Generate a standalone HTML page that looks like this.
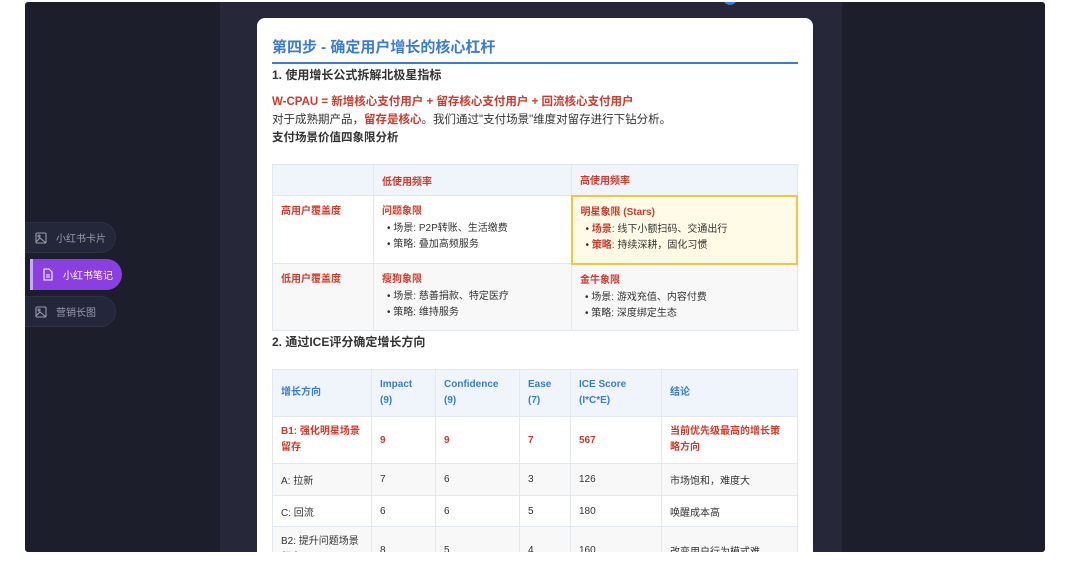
<!DOCTYPE html>
<html><head><meta charset="utf-8"><style>
*{margin:0;padding:0;box-sizing:border-box}
body{width:1080px;height:570px;background:#fff;font-family:"Liberation Sans","Noto Sans CJK SC",sans-serif;position:relative;overflow:hidden}
.panel{position:absolute;left:25px;top:2px;width:1020px;height:550px;background:#1c1e2b;border-radius:3px;overflow:hidden}
.mid{position:absolute;left:195px;top:0;width:622px;height:550px;background:#262738}
.dot{position:absolute;left:504px;top:-6px;width:12px;height:9px;border-radius:50%;background:#3a7bd5}
.btn{position:absolute;height:31px;border-radius:0 16px 16px 0;background:#24263a;color:#9a9cab;font-size:10px;display:flex;align-items:center;padding-left:10px;gap:9px;border:1px solid #2e3044;border-left:none}
.btn.on{background:#8a3fe0;color:#fff;border:none;border-left:3px solid #c9a6ff;padding-left:9px}
.card{position:absolute;left:232px;top:16px;width:556px;height:560px;background:#fff;border-radius:8px;padding:0 15px;color:#333}
h1{font-size:15px;color:#3a7bd5;font-weight:bold;padding-top:18px;height:46px;border-bottom:2px solid #3a7bd5}
.h2{font-size:12px;font-weight:bold;color:#333;height:20px}
.red{color:#d0392b;font-weight:bold}
p{font-size:11.5px;line-height:18px}
table{border-collapse:collapse;width:526px;font-size:10px}
td,th{border:1px solid #e3e7ee;text-align:left;vertical-align:top;padding:6px 8px 3px}
th{background:#f0f5fc;color:#d0392b;font-weight:bold;vertical-align:middle;padding:0 8px}
ul{list-style:none;margin-top:4px}
li{line-height:16px;padding-left:5px}
li:before{content:"• ";}
.t2 th{color:#3a7bd5;line-height:16px}
.t2 td{vertical-align:middle;padding:0 8px}
.g{background:#f8f8f8}
</style></head><body>
<div class="panel">
<div class="mid"><div class="dot"></div></div>
<div class="btn" style="left:0;top:220px;width:91px"><svg width="12" height="12" viewBox="0 0 12 12" fill="none" stroke="#9a9cab" stroke-width="1.1"><rect x="1" y="1" width="10" height="10" rx="1"/><circle cx="4" cy="4" r="1"/><path d="M1 10l4-4 6 5"/></svg>小红书卡片</div>
<div class="btn on" style="left:5px;top:257px;width:92px"><svg width="12" height="13" viewBox="0 0 12 13" fill="none" stroke="#fff" stroke-width="1.1"><path d="M2 1h5l3 3v8H2z M4 7h4 M4 9h4"/></svg>小红书笔记</div>
<div class="btn" style="left:0;top:294px;width:91px"><svg width="12" height="12" viewBox="0 0 12 12" fill="none" stroke="#9a9cab" stroke-width="1.1"><rect x="1" y="1" width="10" height="10" rx="1"/><circle cx="4" cy="4" r="1"/><path d="M1 10l4-4 6 5"/></svg>营销长图</div>
<div class="card">
<h1>第四步 - 确定用户增长的核心杠杆</h1>
<div class="h2" style="margin-top:2px">1. 使用增长公式拆解北极星指标</div>
<p class="red" style="margin-top:7px">W-CPAU = 新增核心支付用户 + 留存核心支付用户 + 回流核心支付用户</p>
<p>对于成熟期产品，<span class="red">留存是核心</span>。我们通过"支付场景"维度对留存进行下钻分析。</p>
<p style="font-weight:bold">支付场景价值四象限分析</p>
<table style="margin-top:17px">
<tr style="height:31px"><th style="width:101px"></th><th style="width:198px">低使用频率</th><th>高使用频率</th></tr>
<tr style="height:68px"><td class="red">高用户覆盖度</td><td><span class="red">问题象限</span><ul><li>场景: P2P转账、生活缴费</li><li>策略: 叠加高频服务</li></ul></td><td style="background:#fffbe6;border:2px solid #f5c542"><span class="red">明星象限 (Stars)</span><ul><li><span class="red">场景</span>: 线下小额扫码、交通出行</li><li><span class="red">策略</span>: 持续深耕，固化习惯</li></ul></td></tr>
<tr style="height:67px" class="g"><td class="red">低用户覆盖度</td><td><span class="red">瘦狗象限</span><ul><li>场景: 慈善捐款、特定医疗</li><li>策略: 维持服务</li></ul></td><td><span class="red">金牛象限</span><ul><li>场景: 游戏充值、内容付费</li><li>策略: 深度绑定生态</li></ul></td></tr>
</table>
<div class="h2" style="margin-top:2px">2. 通过ICE评分确定增长方向</div>
<table class="t2" style="margin-top:16px">
<tr style="height:47px"><th style="width:99px">增长方向</th><th style="width:64px">Impact<br>(9)</th><th style="width:84px">Confidence<br>(9)</th><th style="width:51px">Ease<br>(7)</th><th style="width:91px">ICE Score<br>(I*C*E)</th><th>结论</th></tr>
<tr style="height:47px" class="red"><td style="line-height:16px">B1: 强化明星场景留存</td><td>9</td><td>9</td><td>7</td><td>567</td><td style="line-height:16px">当前优先级最高的增长策略方向</td></tr>
<tr style="height:32px" class="g"><td>A: 拉新</td><td>7</td><td>6</td><td>3</td><td>126</td><td>市场饱和，难度大</td></tr>
<tr style="height:31px"><td>C: 回流</td><td>6</td><td>6</td><td>5</td><td>180</td><td>唤醒成本高</td></tr>
<tr style="height:47px" class="g"><td style="line-height:16px">B2: 提升问题场景频率</td><td>8</td><td>5</td><td>4</td><td>160</td><td>改变用户行为模式难</td></tr>
</table>
</div>
</div>
</body></html>
